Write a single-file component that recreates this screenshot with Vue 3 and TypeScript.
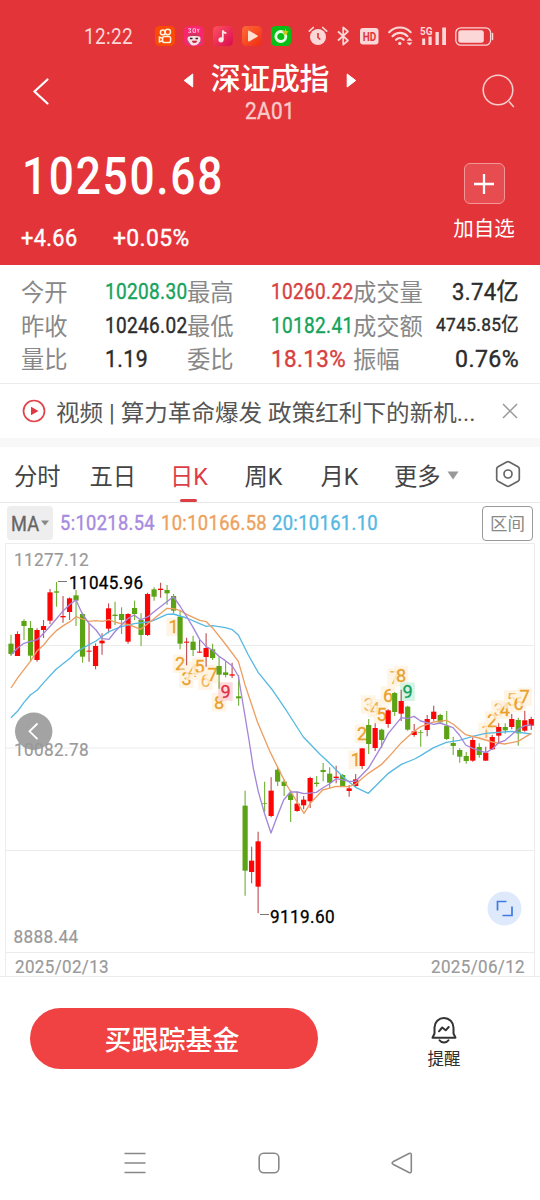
<script setup lang="ts">
import { h, type FunctionalComponent } from 'vue'

interface FitProps {
  text: string
  size: number
  width: number
  weight?: number
}

/* Condensed figure text: squeezed to the given width, capitals centred in the box. */
const FitText: FunctionalComponent<FitProps> = (p) =>
  h('svg', { width: p.width, height: p.size, style: 'display:block;overflow:visible;flex:none' }, [
    h('text', {
      x: 0,
      y: p.size * 0.856,
      'font-size': p.size,
      'font-weight': p.weight ?? 400,
      fill: 'currentColor',
      stroke: 'currentColor',
      'stroke-width': p.weight ? 0 : 0.4,
      textLength: p.width,
      lengthAdjust: 'spacingAndGlyphs',
    }, p.text),
  ])
FitText.props = ['text', 'size', 'width', 'weight']

interface Stat { label: string; value: string; tone: string; size: number; width: number }
const stats: Stat[] = [
  { label: '今开', value: '10208.30', tone: 'down', size: 22, width: 82.5 },
  { label: '最高', value: '10260.22', tone: 'up', size: 22, width: 82.5 },
  { label: '成交量', value: '3.74亿', tone: 'flat', size: 24, width: 67 },
  { label: '昨收', value: '10246.02', tone: 'flat', size: 22, width: 82.5 },
  { label: '最低', value: '10182.41', tone: 'down', size: 22, width: 82.5 },
  { label: '成交额', value: '4745.85亿', tone: 'flat', size: 19, width: 83 },
  { label: '量比', value: '1.19', tone: 'flat', size: 24, width: 43 },
  { label: '委比', value: '18.13%', tone: 'up', size: 24, width: 75 },
  { label: '振幅', value: '0.76%', tone: 'flat', size: 24, width: 64 },
]

const tabs = ['分时', '五日', '日K', '周K', '月K', '更多']

/* [direction, body top, body bottom, high, low]; three units per pixel */
type Candle = ['r' | 'g', number, number, number, number]
const shift = (d: number, rows: Candle[]): Candle[] =>
  rows.map(([c, a, b, t, l]) => [c, a + d, b + d, t + d, l + d])

const candles: Candle[] = [
  ...shift(0, [
    ['g', 221, 252, 194, 258], ['r', 192, 258, 184, 258], ['g', 153, 168, 148, 210],
    ['g', 174, 257, 153, 276], ['r', 180, 270, 175, 275], ['r', 168, 180, 150, 204],
    ['r', 67, 152, 57, 162], ['g', 64, 68, 36, 110], ['r', 138, 142, 78, 158],
    ['r', 85, 126, 82, 150], ['g', 76, 92, 60, 168], ['g', 132, 260, 128, 278],
    ['r', 242, 245, 160, 275], ['r', 228, 288, 220, 298], ['r', 212, 220, 190, 254],
    ['r', 115, 176, 100, 190], ['g', 134, 138, 95, 165], ['g', 132, 150, 112, 192],
    ['r', 132, 215, 130, 221], ['g', 114, 132, 92, 150], ['g', 150, 195, 130, 228],
    ['r', 72, 195, 68, 198], ['g', 58, 80, 52, 92], ['r', 56, 60, 38, 83],
    ['g', 60, 70, 45, 104], ['g', 78, 122, 72, 130], ['g', 140, 221, 122, 238],
    ['r', 215, 218, 203, 286], ['g', 215, 240, 197, 258], ['r', 245, 248, 210, 248],
    ['r', 234, 261, 190, 290], ['g', 238, 264, 221, 270], ['g', 288, 314, 258, 356],
    ['g', 307, 315, 274, 322], ['r', 313, 317, 278, 324], ['g', 379, 385, 315, 407],
  ]),
  ...shift(510, [
    ['g', 197, 392, 152, 467], ['r', 362, 396, 320, 430], ['r', 304, 440, 275, 520],
    ['g', 189, 191, 125, 215], ['r', 152, 228, 112, 232], ['g', 89, 125, 80, 138],
    ['g', 125, 138, 118, 168], ['g', 161, 180, 150, 246], ['r', 191, 213, 155, 215],
    ['r', 179, 196, 168, 208], ['r', 114, 184, 110, 204], ['g', 128, 132, 108, 140],
    ['g', 90, 96, 69, 124], ['g', 101, 128, 82, 146], ['r', 110, 114, 77, 130],
    ['g', 105, 138, 102, 140], ['r', 145, 153, 135, 170], ['r', 118, 138, 102, 142],
  ]),
  ...shift(210, [
    ['r', 325, 378, 325, 387], ['g', 255, 312, 237, 342], ['r', 264, 324, 250, 333],
    ['g', 269, 300, 266, 324], ['r', 211, 252, 208, 263], ['g', 159, 216, 156, 228],
    ['r', 183, 221, 149, 243], ['g', 200, 269, 197, 272], ['r', 274, 285, 252, 290],
    ['g', 276, 278, 270, 320], ['r', 237, 270, 225, 289], ['r', 215, 237, 197, 242],
    ['g', 225, 247, 221, 252], ['g', 258, 297, 213, 300], ['g', 309, 318, 290, 345],
    ['g', 330, 350, 325, 368], ['g', 348, 363, 336, 371], ['r', 300, 362, 292, 365],
    ['g', 321, 345, 310, 353], ['r', 338, 362, 320, 362], ['r', 291, 328, 285, 330],
    ['r', 261, 287, 250, 310], ['g', 261, 271, 250, 281], ['r', 237, 261, 222, 268],
    ['g', 240, 280, 233, 317], ['r', 241, 272, 213, 275], ['r', 237, 257, 230, 270],
  ]),
]
const cx = (i: number) => 33 + i * 19.51

const averages = [
  { cls: 'ma20', points: '33,443 54,422 72,397 91,375 112,360 131,338 169,297 210,265 228,247 247,235 288,213 327,185 364,170 403,161 444,156 461,151 501,133 520,132 560,144 599,161 619,169 637,167 676,173 697,179 715,195 745,255 775,308 815,357 860,423 910,501 960,553 985,576 1030,622 1067,652 1105,670 1165,610 1204,583 1244,567 1262,557 1301,533 1339,517 1378,511 1418,499 1457,490 1535,484 1594,492' },
  { cls: 'ma10', points: '33,354 54,322 91,274 112,242 131,225 151,200 169,182 190,167 210,155 228,140 267,154 288,152 307,154 327,149 344,156 364,161 385,163 422,178 461,147 501,115 520,116 540,121 560,133 599,151 619,155 637,173 676,222 715,274 735,344 772,455 810,545 832,590 860,645 912,730 931,700 968,660 1008,649 1048,650 1067,642 1105,610 1145,583 1165,562 1204,518 1242,484 1262,470 1301,456 1339,451 1359,462 1397,494 1437,504 1477,516 1514,522 1554,514 1594,490' },
  { cls: 'ma5', points: '33,254 54,233 72,220 91,214 112,209 131,190 151,168 190,122 210,103 228,90 247,132 267,160 288,180 307,206 327,208 344,186 364,165 385,145 403,135 422,150 444,140 461,126 520,80 540,108 560,140 578,170 599,208 619,230 637,240 656,258 676,272 697,288 715,318 747,510 760,595 775,665 794,732 813,789 832,738 851,690 871,666 892,666 912,671 949,667 968,654 988,642 1008,626 1048,634 1067,634 1105,595 1144,530 1165,490 1204,443 1222,446 1242,439 1262,453 1301,463 1320,459 1359,473 1378,495 1397,525 1418,535 1457,548 1477,537 1496,518 1514,512 1554,478 1574,467 1594,465' },
]

/* Nine-turn sequence marks: [digit, x, y, style] */
type Mark = [number, number, number, string]
const marks: Mark[] = [
  [1, 173.5, 627, ''], [2, 180, 664, ''], [3, 186.3, 679, ''], [4, 193, 671, 'pale'],
  [5, 199.5, 667, ''], [6, 205.5, 681, 'pale'], [7, 212.5, 674.5, ''], [8, 219, 702.5, ''],
  [9, 225.4, 691.8, 'hot'],
  [1, 355.7, 760, ''], [2, 362, 734, ''], [3, 368.3, 704.7, 'pale'], [4, 375, 708.5, 'pale'],
  [5, 381.3, 715, ''], [6, 388, 695.7, ''], [7, 394.5, 677.7, 'pale'], [8, 401, 675.5, ''],
  [9, 407.5, 692, 'cool'],
  [1, 485.7, 731.7, 'pale'], [2, 492, 720.7, ''], [3, 498.5, 709.7, 'pale'], [4, 504.7, 710, ''],
  [5, 511.3, 699.5, 'pale'], [6, 518.3, 703.3, ''], [7, 524.5, 697, ''],
]
</script>

<template>
  <div class="screen">
    <header class="hero">
      <div class="status">
        <FitText class="clock" text="12:22" :size="22" :width="49" :weight="400" />
        <div class="apps">
          <svg class="app" viewBox="0 0 20 20">
            <rect width="20" height="20" rx="4.5" fill="#fb4a05" />
            <g fill="none" stroke="#fff0dc" stroke-width="1.5">
              <circle cx="7.8" cy="6.4" r="2.4" /><circle cx="12.8" cy="6" r="2.7" />
              <rect x="7.6" y="10.6" width="8" height="6" rx="1.8" />
              <path d="M7.4 12.2 4.4 11v5l3-1.2" />
            </g>
          </svg>
          <svg class="app" viewBox="0 0 20 20">
            <rect width="20" height="20" rx="4.5" fill="#f7266e" />
            <path d="M4.2 2.800h2.800l-1.200 1.700L7 6.300H4.200M9 2.800v3.500M9 2.800h2.500v3.500H9M13 2.800l1.200 1.700 1.200-1.700M14.200 4.500v2" fill="none" stroke="#ffc0dc" stroke-width="1" />
            <path d="M3.500 13c0-3.500 3-5 6.500-5s6.500 1.500 6.500 5-3 6.500-6.500 6.500S3.500 17 3.500 13Z" fill="#f6dfe2" />
            <path d="M3 11c1-2.500 4-3.500 7-3.500s6 1 7 3.500c-2-.6-4-1-7-1s-5 .4-7 1Z" fill="#c9355f" />
            <path d="M6 12.500h2.500M11.500 12.500H14" stroke="#402030" stroke-width="1.300" />
            <path d="M8 14.800h5c0 3-5 3-5 0Z" fill="#c02238" /><path d="m3 14 3.500 5M15 17.500l2.500-2" stroke="#906878" stroke-width="1.200" />
          </svg>
          <svg class="app" viewBox="0 0 20 20">
            <defs><linearGradient id="music" x2="1" y2="1"><stop stop-color="#ff5160" /><stop offset="1" stop-color="#d90c50" /></linearGradient></defs>
            <rect width="20" height="20" rx="4.500" fill="url(#music)" />
            <circle cx="8" cy="13.800" r="2.600" fill="#ffe8ea" /><path d="M9.800 13.800V4.500c.5 2 1.400 2.500 3.600 2.700" fill="none" stroke="#ffe8ea" stroke-width="1.700" />
          </svg>
          <svg class="app" viewBox="0 0 20 20">
            <defs><linearGradient id="play" x2="1" y2="1"><stop stop-color="#ff6c36" /><stop offset="1" stop-color="#f02a12" /></linearGradient></defs>
            <rect width="20" height="20" rx="4.500" fill="url(#play)" />
            <path d="M6 5.400c0-.8.600-1 1.200-.700l8.200 4.700c.6.400.6.900 0 1.300l-8.200 4.700c-.6.300-1.200 0-1.200-.700Z" fill="#ffdfd0" />
          </svg>
          <svg class="app" viewBox="0 0 20 20">
            <rect width="20" height="20" rx="4.500" fill="#08bd16" />
            <circle cx="9.800" cy="10.500" r="5" fill="none" stroke="#e9fbe6" stroke-width="2.800" />
            <path d="m14.500 2.800 1 2.200 2.300.5-1.800 1.500.3 2.400-2-1.200-2.200 1 .6-2.300-1.500-1.700 2.300-.3Z" fill="#c9c51b" />
          </svg>
        </div>
        <svg class="alarm" width="20" height="20" viewBox="0 0 20 20">
          <circle cx="10" cy="11" r="8" fill="currentColor" />
          <path d="M1.300 5.200 5.300 1.500M18.700 5.200l-4-3.700" stroke="currentColor" stroke-width="1.700" stroke-linecap="round" />
          <path d="M10 7v4.500l2.300 2" fill="none" stroke="#e33539" stroke-width="1.600" />
        </svg>
        <svg class="bt" width="13" height="20" viewBox="0 0 13 20">
          <path d="m1 5.500 10 9-4.800 4.200V1.300L11 5.500l-10 9" fill="none" stroke="currentColor" stroke-width="1.700" stroke-linejoin="round" />
        </svg>
        <svg class="hd" width="19" height="17" viewBox="0 0 19 17">
          <rect width="18.500" height="16.500" rx="3" fill="currentColor" />
          <text x="2.700" y="13" font-size="13" font-weight="700" fill="#e33539" textLength="13.500" lengthAdjust="spacingAndGlyphs">HD</text>
        </svg>
        <svg class="wifi" width="25" height="20" viewBox="0 0 25 20">
          <g fill="none" stroke="currentColor" stroke-width="2.100" stroke-linecap="round">
            <path d="M1.200 6.200c6-6.200 15.500-6.200 21.500 0" /><path d="M4.500 10.200c4.200-4.400 10.800-4.400 15 0" /><path d="M8 13.800c2.200-2.200 5.500-2.200 7.700 0" />
          </g>
          <circle cx="11.800" cy="17.400" r="1.700" fill="currentColor" />
          <path d="m18.500 14.800 3-3.200 3 3.200ZM18.500 16.400l3 3 3-3Z" fill="currentColor" />
        </svg>
        <svg class="cell" width="28" height="20" viewBox="0 0 28 20">
          <text x="0" y="9.200" font-size="11.500" font-weight="700" fill="currentColor" textLength="12.500" lengthAdjust="spacingAndGlyphs">5G</text>
          <path d="M2.200 12.500h3V19h-3zM8.500 10.500h3.200V19h-3.200zM15.500 6h3.300v13h-3.300zM22.200 1.500h3.800V19h-3.800z" fill="currentColor" />
        </svg>
        <svg class="battery" width="39" height="19" viewBox="0 0 39 19">
          <rect x=".8" y=".8" width="34.800" height="17.400" rx="5" fill="none" stroke="currentColor" stroke-width="1.300" />
          <rect x="3.300" y="3.300" width="25.500" height="12.400" rx="2.500" fill="currentColor" />
          <path d="M37.500 6.500v6" stroke="currentColor" stroke-width="1.500" stroke-linecap="round" />
        </svg>
      </div>

      <div class="titlebar">
        <svg width="18" height="30" viewBox="0 0 18 30"><path d="M15.500 3.500 2.500 15.500l13 12" fill="none" stroke="#fff" stroke-width="2.200" stroke-linecap="round" /></svg>
        <div class="title">
          <div class="name">
            <svg width="11" height="15" viewBox="0 0 11 15"><path d="M9.700 1v13L1.200 7.500Z" fill="#fff" stroke="#fff" stroke-linejoin="round" /></svg>
            <h1>深证成指</h1>
            <svg width="11" height="15" viewBox="0 0 11 15"><path d="M1.200 1v13l8.500-6.500Z" fill="#fff" stroke="#fff" stroke-linejoin="round" /></svg>
          </div>
          <FitText class="code" text="2A01" :size="24" :width="50" />
        </div>
        <svg class="search" width="36" height="36" viewBox="0 0 36 36"><circle cx="17" cy="17" r="14.800" /><path d="m28 28.500 4.800 5.500" /></svg>
      </div>

      <div class="quote">
        <div>
          <FitText class="price" text="10250.68" :size="52" :width="202" :weight="500" />
          <div class="change">
            <FitText text="+4.66" :size="23" :width="56.5" />
            <FitText text="+0.05%" :size="23" :width="76.5" />
          </div>
        </div>
        <div class="add">
          <div class="plus"><svg width="22" height="22" viewBox="0 0 22 22"><path d="M11 1v20M1 11h20" stroke="#fff" stroke-width="2.300" /></svg></div>
          <span>加自选</span>
        </div>
      </div>
    </header>

    <section class="stats">
      <div v-for="s in stats" :key="s.label" class="stat">
        <span class="label">{{ s.label }}</span>
        <FitText class="value" :class="s.tone" :text="s.value" :size="s.size" :width="s.width" />
      </div>
    </section>

    <section class="news">
      <svg width="24" height="24" viewBox="0 0 24 24"><circle cx="12" cy="12" r="10.500" fill="none" stroke="#e2434b" stroke-width="1.700" /><path d="M9 7.800v8.400l7.500-4.200Z" fill="#dd3a43" /></svg>
      <FitText class="headline" text="视频 | 算力革命爆发 政策红利下的新机..." :size="23" :width="419.5" :weight="400" />
      <svg class="close" width="16" height="16" viewBox="0 0 16 16"><path d="m1 1 14 14M15 1 1 15" stroke="#999" stroke-width="1.500" /></svg>
    </section>

    <nav class="tabs">
      <div v-for="t in tabs" :key="t" class="tab" :class="{ active: t === '日K' }">
        <span>{{ t }}</span>
        <svg v-if="t === '更多'" width="12" height="9" viewBox="0 0 12 9"><path d="M.5.5h11L6 8.500Z" fill="#999" /></svg>
      </div>
      <svg class="gear" width="28" height="28" viewBox="0 0 28 28">
        <path d="M12.700 2q1.300-.7 2.600 0l8.700 4.800q1.300.8 1.300 2.200v10q0 1.400-1.300 2.200L15.300 26q-1.300.7-2.600 0L4 21.200Q2.700 20.400 2.700 19V9q0-1.400 1.300-2.200Z" /><circle cx="14" cy="14" r="4" />
      </svg>
    </nav>

    <section class="indicator">
      <div class="picker"><FitText text="MA" :size="21" :width="28.5" /><svg width="8" height="6" viewBox="0 0 8 6"><path d="M0 .5h8L4 5.500Z" fill="#888" /></svg></div>
      <FitText class="ma5" text="5:10218.54" :size="20.5" :width="95" />
      <FitText class="ma10" text="10:10166.58" :size="20.5" :width="106" />
      <FitText class="ma20" text="20:10161.10" :size="20.5" :width="106" />
      <div class="range">区间</div>
    </section>

    <svg class="chart" width="540" height="434" viewBox="0 543 540 434">
      <g class="grid">
        <path d="M5.500 977V543.500h529V977" />
        <path d="M6 645.500h528M6 748h528M6 850.500h528M6 952.500h528" />
        <path d="M0 976.500h540" />
      </g>
      <g v-for="(m, i) in marks" :key="i" class="mark" :class="m[3]">
        <rect :x="m[1] - 7.3" :y="m[2] - 9.500" width="14.600" height="18.500" rx="1" />
        <text :x="m[1] - 4.900" :y="m[2] + 6.300" font-size="18.500" textLength="10.200" lengthAdjust="spacingAndGlyphs">{{ m[0] }}</text>
      </g>
      <g transform="translate(0 570) scale(.33333)">
        <g v-for="(c, i) in candles" :key="i" :class="c[0]">
          <path class="wick" :d="`M${cx(i)} ${c[3]}V${c[4]}`" />
          <rect :x="cx(i) - 7.8" :y="c[1]" width="15.6" :height="c[2] - c[1]" />
        </g>
        <polyline v-for="m in averages" :key="m.cls" :class="m.cls" :points="m.points" />
      </g>
      <g class="extreme">
        <path d="M58 581.500h9M260 914.500h9" />
        <text x="69" y="589" textLength="74.500" lengthAdjust="spacingAndGlyphs">11045.96</text>
        <text x="270" y="922.500" textLength="65" lengthAdjust="spacingAndGlyphs">9119.60</text>
      </g>
      <circle cx="33.700" cy="731.300" r="18.700" fill="#a3a3a3" />
      <path d="m37.500 723.500-8 7.800 8 7.800" fill="none" stroke="#fff" stroke-width="1.800" />
      <g class="axis">
        <text x="14" y="566" textLength="75" lengthAdjust="spacingAndGlyphs">11277.12</text>
        <text x="14" y="755.500" textLength="75" lengthAdjust="spacingAndGlyphs">10082.78</text>
        <text x="13.500" y="942.500" textLength="65" lengthAdjust="spacingAndGlyphs">8888.44</text>
        <text x="15" y="972.500" textLength="94" lengthAdjust="spacingAndGlyphs">2025/02/13</text>
        <text x="431" y="972.500" textLength="94" lengthAdjust="spacingAndGlyphs">2025/06/12</text>
      </g>
      <circle cx="504.500" cy="908.500" r="17" fill="#dfe9fc" />
      <path d="M497.500 910.500v-9h9M502.500 915.500h9.500v-9" fill="none" stroke="#3f7be0" stroke-width="1.700" />
    </svg>

    <section class="actions">
      <button class="buy">买跟踪基金</button>
      <div class="remind">
        <svg width="28" height="30" viewBox="0 0 28 30">
          <g fill="none" stroke="#333" stroke-width="2" stroke-linejoin="round" stroke-linecap="round">
            <path d="M4.500 17.500V11.500a9.500 9.500 0 0 1 19 0v6l2 4.200h-23Z" /><path d="M9.500 24.300c2 3 7 3 9 0" />
            <path d="m9 15.300 3.200-3.800 3.500 2.800 3-3.300" />
          </g>
        </svg>
        <span>提醒</span>
      </div>
    </section>

    <footer class="system">
      <svg width="22" height="22" viewBox="0 0 22 22"><path d="M.5 1.500h21M.5 11h21M.5 20.500h21" /></svg>
      <svg width="22" height="22" viewBox="0 0 22 22"><rect x="1.200" y="1.200" width="19.600" height="19.600" rx="4.500" /></svg>
      <svg width="22" height="22" viewBox="0 0 22 22"><path d="M2 9.800 18 1.500q2.300-.8 2.300 1.200v16.600q0 2-2.300 1.200L2 12.200q-1.800-1.200 0-2.400Z" /></svg>
    </footer>
  </div>
</template>

<style>
html, body { background: #fff; }
</style>

<style scoped>
.screen {
  width: 540px;
  height: 1200px;
  overflow: hidden;
  background: #fff;
  color: #2c2c2c;
  font-family: Roboto, "Noto Sans CJK SC", sans-serif;
  letter-spacing: .4px;
  display: flex;
  flex-direction: column;
}
.screen > * { flex: none; box-sizing: border-box; }
svg { flex: none; display: block; overflow: visible; }

.hero { height: 265px; background: #e33539; color: #fff; }
.status { height: 40px; padding: 16px 0 0 84px; display: flex; align-items: center; color: #fbd7d7; }
.status text { letter-spacing: 0; }
.apps { display: flex; gap: 9px; margin-left: 22px; }
.app { width: 20px; height: 20px; }
.alarm { margin-left: 17px; }
.bt { margin-left: 9px; }
.hd { margin-left: 10px; }
.wifi { margin-left: 9px; }
.cell { margin-left: 7px; }
.battery { margin-left: 7px; }

.titlebar { height: 69px; padding: 0 23px 0 32px; display: flex; align-items: center; justify-content: space-between; }
.title { display: flex; flex-direction: column; align-items: center; margin-left: 9px; }
.name { display: flex; align-items: center; height: 38px; margin-top: 1px; }
.name svg { margin-top: 3px; }
h1 { margin: 0 17px; font-size: 30px; line-height: 38px; font-weight: 500; letter-spacing: -.4px; }
.code { color: #f9caca; margin-top: 0; }
.search { fill: none; stroke: #f8cccd; stroke-width: 1.600; }

.quote { height: 140px; padding: 0 20px 0 22px; display: flex; justify-content: space-between; }
.price { margin-top: 24px; letter-spacing: 2px; }
.change { display: flex; gap: 35px; margin: 25px 0 0 -1px; }
.add { width: 72px; margin-right: 0; padding-top: 38px; text-align: center; }
.plus { width: 39px; height: 39px; margin: 0 auto; border: 1px solid #f29698; border-radius: 6px; background: #e74c50; display: flex; align-items: center; justify-content: center; }
.add span { display: block; margin-top: 10px; font-size: 20.500px; line-height: 30px; letter-spacing: 0; }

.stats { height: 119px; padding: 10px 21px 8px; border-bottom: 1px solid #ececec; display: grid; grid-template-columns: 166px 166px 166px; grid-auto-rows: 33.400px; }
.stat { display: flex; align-items: center; }
.label { width: 84px; flex: none; padding-top: 3px; color: #888; font-size: 23.300px; line-height: 30px; letter-spacing: 0; white-space: nowrap; }
.value { margin-top: -1px; }
.stat:nth-child(3n) .label { width: auto; }
.stat:nth-child(3n) .value { margin-left: auto; }
.up { color: #d74141; }
.down { color: #16a35c; }

.news { height: 54px; padding: 0 22px; display: flex; align-items: center; }
.headline { margin: 2px 0 0 10px; color: #555; letter-spacing: 0; }
.close { margin-left: auto; }

.tabs { height: 65px; padding-left: 14px; border-top: 9px solid #f8f8f8; border-bottom: 1px solid #e8e8e8; display: grid; grid-template-columns: 75.500px 80.500px 74.500px 76px 73.500px 99.500px 28px; align-items: stretch; letter-spacing: 0; }
.tab { position: relative; display: flex; align-items: center; gap: 6px; font-size: 23.300px; color: #444; padding-top: 1px; }
.active { color: #dc3e46; }
.active::after { content: ""; position: absolute; left: 10px; bottom: 0; width: 17px; height: 3px; border-radius: 2px; background: #dc3e46; }
.gear { align-self: center; margin-top: -2px; fill: none; stroke: #666; stroke-width: 1.700; }

.indicator { height: 40px; padding: 0 7px; display: flex; align-items: center; }
.indicator > svg { margin-top: -1px; }
.picker { width: 46px; height: 34px; border-radius: 4px; background: #eee; color: #666; display: flex; align-items: center; justify-content: center; gap: 1px; }
.indicator .ma5 { margin-left: 7px; color: #a88ae0; }
.indicator .ma10 { margin-left: 6px; color: #eda15d; }
.indicator .ma20 { margin-left: 5px; color: #55b8e3; }
.range { margin-left: auto; box-sizing: border-box; width: 51px; height: 35px; border: 1px solid #999; border-radius: 4px; color: #888; font-size: 17.500px; line-height: 34px; letter-spacing: 0; text-align: center; }

.chart { display: block; }
.grid { fill: none; stroke: #ececec; stroke-width: 1; }
.chart .r { fill: #fd0505; stroke: #b63338; }
.chart .g { fill: #5ba314; stroke: #5ba314; }
.chart .r rect, .chart .g rect { stroke: none; }
.wick { stroke-width: 3.400; stroke-opacity: .85; }
.chart polyline { fill: none; stroke-width: 4; stroke-linejoin: round; }
polyline.ma5 { stroke: #a386d9; }
polyline.ma10 { stroke: #ec9f63; }
polyline.ma20 { stroke: #58b9e2; }
.mark rect { fill: #fff1df; fill-opacity: .75; }
.mark text { fill: #e9a02c; stroke: #e9a02c; stroke-width: .3; letter-spacing: 0; }
.mark.pale text { fill-opacity: .75; stroke: none; }
.mark.hot rect { fill: #ffd6d8; fill-opacity: .9; }
.mark.hot text { fill: #dc3346; stroke: #dc3346; }
.mark.cool rect { fill: #d2f2e2; fill-opacity: .9; }
.mark.cool text { fill: #15a05c; stroke: #15a05c; }
.extreme path { stroke: #777; }
.extreme text { fill: #000; stroke: #000; stroke-width: .3; font-size: 18.500px; }
.axis text { fill: #999; stroke: #999; stroke-width: .2; font-size: 18.500px; }

.actions { height: 123px; padding: 31px 0 0 30px; display: flex; letter-spacing: 0; }
.buy { width: 288px; height: 61px; padding: 5px 0 0; border: 0; border-radius: 31px; background: #f04143; color: #fff; font: 500 27px/56px Roboto, "Noto Sans CJK SC", sans-serif; text-indent: -4px; }
.remind { width: 60px; margin: 8px 0 0 96px; display: flex; flex-direction: column; align-items: center; font-size: 16.500px; line-height: 27px; }

.system { height: 100px; padding: 52px 127px 0 124px; display: flex; justify-content: space-between; }
.system svg { fill: none; stroke: #888; stroke-width: 1.600; }
</style>
